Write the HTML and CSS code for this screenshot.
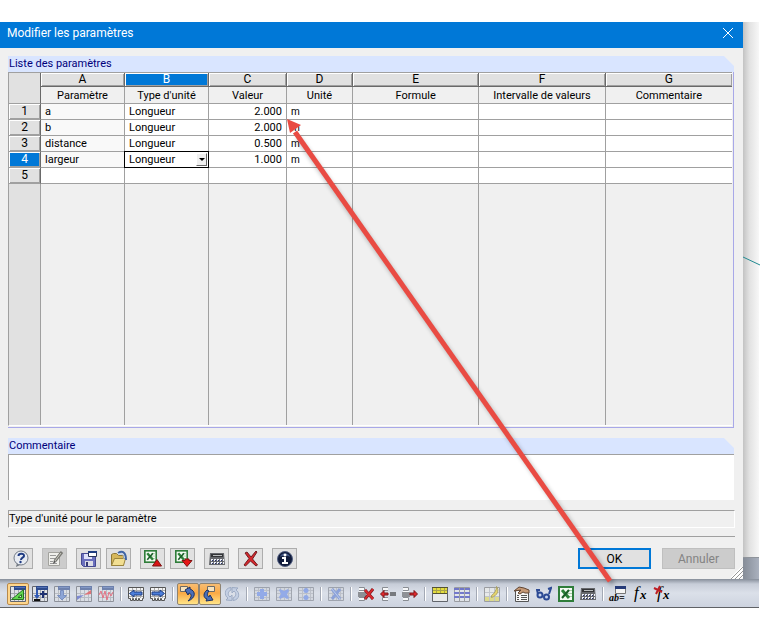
FILE: index.html
```html
<!DOCTYPE html>
<html lang="fr">
<head>
  <meta charset="UTF-8">
  <title>Modifier les paramètres</title>
  <link rel="stylesheet" href="styles.css">
</head>
<body>
  <!-- shapes shared by several icons -->
  <svg class="sprite" aria-hidden="true">
    <symbol id="grid" viewBox="0 0 16 16">
      <path fill="#dfe2e6" d="M0 0h16v16H0z"/>
      <path fill="none" stroke="#a3a7ae" d="M4.500 3v13M8.500 3v13M12.500 3v13M0 7.500h16M0 11.500h16"/>
      <path fill="none" stroke="#62656c" d="M.5.5h15v15H.5z"/>
      <path fill="#2d4a8c" d="M4 0h12v4H4z"/>
      <path fill="#5271b5" d="M5 1h10v1H5z"/>
    </symbol>
    <symbol id="cells" viewBox="0 0 16 16">
      <path fill="#d2d6dd" d="M0 1h16v14H0z"/>
      <path fill="none" stroke="#a9adb6" d="M4.500 1v14M8.500 1v14M12.500 1v14M0 4.500h16M0 7.500h16M0 11.500h16"/>
      <path fill="none" stroke="#7d828c" d="M.5 1.500h15v13H.5z"/>
    </symbol>
    <symbol id="ruler" viewBox="0 0 16 16">
      <path fill="#f3f4f5" stroke="#555" d="M.5 1.500h15v11h-1v2h-3v-2h-1v2h-2v-2h-1v2h-2v-2h-1v2h-2v-2h-2z"/>
      <path stroke="#aaa" d="M1 4.500h14M1 10.500h14M4.500 2v10M8.500 2v10M12.500 2v10"/>
    </symbol>
    <symbol id="excel" viewBox="0 0 16 16">
      <path fill="#2f7d3a" d="M0 0h16v16H0z"/>
      <path fill="#f5fbf4" d="M2 2h12v12H2z"/>
      <path stroke="#a8cfa8" d="M9 4.500h5M9 7.500h5M9 10.500h5"/>
      <path stroke="#2c8138" stroke-width="3" d="M4 4l7 8"/>
      <path stroke="#195f27" stroke-width="2" d="M11 4l-7 8"/>
    </symbol>
    <symbol id="calc" viewBox="0 0 16 16">
      <path fill="#66686c" d="M1 2h14l1 12H0z"/>
      <path fill="#333437" d="M2 3h12v3H2z"/>
      <path fill="#b9bcbd" d="M4 4h9v1H4z"/>
      <path stroke="#eef0f8" stroke-width="2" stroke-dasharray="2 1" d="M2 9h13M2 12h13"/>
      <path stroke="#27336d" stroke-dasharray="1 2" d="M3 9.500h12M3 12.500h12"/>
    </symbol>
    <symbol id="rows" viewBox="0 0 16 16">
      <path fill="#f7f8f9" d="M1 1h6v14H1z"/>
      <path fill="#8d9095" d="M0 6h8v5H0z"/>
      <path fill="none" stroke="#898d93" d="M1 1.500h5.500v3H1M1 11.500h5.500v3H1"/>
    </symbol>
  </svg>

  <div class="stage">
    <div class="workspace">
      <form class="dialog">
        <header class="titlebar">
          <h1>Modifier les paramètres</h1>
          <button type="button" class="close-btn" aria-label="Fermer">
            <svg width="12" height="12" viewBox="0 0 12 12"><path stroke="#fff" d="M1 1l10 10M11 1L1 11"/></svg>
          </button>
        </header>

        <div class="content">
          <section class="panel">
            <h2 class="panel-title">Liste des paramètres</h2>
            <div class="table-frame">
              <table class="params">
                <colgroup>
                  <col class="col-index"><col class="col-name"><col class="col-name"><col class="col-value"><col class="col-unit"><col><col><col>
                </colgroup>
                <thead>
                  <tr class="letters">
                    <th rowspan="2" class="corner"></th>
                    <th>A</th><th class="selected">B</th><th>C</th><th>D</th><th>E</th><th>F</th><th>G</th>
                  </tr>
                  <tr class="labels">
                    <th>Paramètre</th><th>Type d'unité</th><th>Valeur</th><th>Unité</th><th>Formule</th><th>Intervalle de valeurs</th><th>Commentaire</th>
                  </tr>
                </thead>
                <tbody>
                  <tr><th>1</th><td class="name">a</td><td>Longueur</td><td class="num">2.000</td><td class="unit">m</td><td></td><td></td><td></td></tr>
                  <tr><th>2</th><td class="name">b</td><td>Longueur</td><td class="num">2.000</td><td class="unit">m</td><td></td><td></td><td></td></tr>
                  <tr><th>3</th><td class="name">distance</td><td>Longueur</td><td class="num">0.500</td><td class="unit">m</td><td></td><td></td><td></td></tr>
                  <tr>
                    <th class="selected">4</th><td class="name">largeur</td>
                    <td class="editing"><div class="cell-select"><select aria-label="Type d'unité"><option>Longueur</option></select><span class="drop"></span></div></td>
                    <td class="num">1.000</td><td class="unit">m</td><td></td><td></td><td></td>
                  </tr>
                  <tr><th>5</th><td></td><td></td><td></td><td></td><td></td><td></td><td></td></tr>
                  <tr class="filler"><td></td><td></td><td></td><td></td><td></td><td></td><td></td><td></td></tr>
                </tbody>
              </table>
            </div>
          </section>

          <section class="panel">
            <h2 class="panel-title"><label for="comment">Commentaire</label></h2>
            <textarea id="comment" class="comment"></textarea>
          </section>

          <div class="hint">Type d'unité pour le paramètre</div>

          <footer class="actions">
            <button type="button" class="tool" aria-label="Aide">
              <svg width="18" height="18" viewBox="0 0 18 18"><path fill="#707780" d="M5 13l-1 4 6-3z"/><circle cx="9" cy="8" r="7" fill="#e7ebf2" stroke="#737b87"/><path fill="none" stroke="#1e3b83" stroke-width="2" d="M6.500 6c0-3 6-3 5.500 0-.3 2-3 1.500-3 4"/><circle cx="8.500" cy="12" r="1.200" fill="#1e3b83"/></svg>
            </button>
            <button type="button" class="tool off" aria-label="Modifier">
              <svg width="18" height="18" viewBox="0 0 18 18"><path fill="#f0f0ec" stroke="#a3a39e" d="M2.500 2.500h11v13h-11z"/><path stroke="#999" d="M4 5.500h6M4 8.500h5M4 11.500h3M4 13.500h7"/><path stroke="#777772" stroke-width="3" d="M16 2l-7 9"/><path stroke="#c9c9bf" d="M15 3l-6 8"/><path fill="#555" d="M7 14l1-4 2 2z"/></svg>
            </button>
            <div class="tool-pair">
              <button type="button" class="tool" aria-label="Enregistrer">
                <svg width="18" height="18" viewBox="0 0 18 18"><path fill="#6b70bd" stroke="#454991" d="M1.500 3.500h14v13h-12l-2-2z"/><path fill="#dfe2fa" d="M4 4h8v5H4z"/><path fill="#dcdde6" d="M5 11h8v5H5z"/><path fill="#343873" d="M6 12h2v4H6z"/><path fill="#fff" stroke="#283357" d="M8.500 1.500h8v5h-8z"/><path stroke="#1f3d80" stroke-width="2" d="M8 2h9"/></svg>
              </button>
              <button type="button" class="tool" aria-label="Ouvrir">
                <svg width="18" height="18" viewBox="0 0 18 18"><path fill="#d6b75a" stroke="#8e7938" d="M1.500 15.500v-11l2-1h3l2 2h5v10z"/><path fill="#f2df92" stroke="#9b853e" d="M1.500 15.500l3-7h11l-2 7z"/><path fill="none" stroke="#3f65a6" stroke-width="2" d="M8 3c5-3 8 0 8 7"/><path fill="none" stroke="#a9c4e8" d="M8 4c4-1 6 1 6 5"/></svg>
              </button>
            </div>
            <div class="tool-pair">
              <button type="button" class="tool" aria-label="Exporter vers Excel">
                <svg width="20" height="18" viewBox="0 0 20 18"><use href="#excel" x="1" width="13" height="13"/><path fill="#d81515" stroke="#7f1212" d="M14 9.500l4.500 6.500h-9z"/></svg>
              </button>
              <button type="button" class="tool" aria-label="Importer depuis Excel">
                <svg width="20" height="18" viewBox="0 0 20 18"><use href="#excel" x="2" width="13" height="13"/><path fill="#e51616" stroke="#7f1212" d="M9 10.500h3V9h4v1.500h3l-5 6z"/></svg>
              </button>
            </div>
            <button type="button" class="tool" aria-label="Calculatrice">
              <svg width="16" height="16"><use href="#calc"/></svg>
            </button>
            <button type="button" class="tool" aria-label="Supprimer">
              <svg width="18" height="18" viewBox="0 0 18 18"><path fill="#d6272c" stroke="#731c20" d="M3 3l2-1 4 5 5-6 1 1-4.500 7 5 6-1.500 1-5.500-5-5 5-1.500-1 5-6.500z"/></svg>
            </button>
            <button type="button" class="tool" aria-label="Informations">
              <svg width="18" height="18" viewBox="0 0 18 18"><circle cx="9" cy="9" r="7.500" fill="#101b3b" stroke="#536082"/><path fill="#405584" d="M4 7c1-5 9-5 10 0-3-2-7-2-10 0z"/><circle cx="9" cy="5" r="1.500" fill="#fff"/><path fill="#fff" d="M6 7h4v5h2v2H6v-2h2V9H6z"/></svg>
            </button>
            <div class="main-actions">
              <button type="submit" class="btn primary">OK</button>
              <button type="button" class="btn" disabled>Annuler</button>
            </div>
          </footer>
        </div>
        <svg class="grip" width="12" height="12" viewBox="0 0 12 12" aria-hidden="true"><path stroke="#fff" stroke-width="3" d="M0 12L12 0M4 12l8-8M8 12l4-4"/><path stroke="#969696" d="M0 12L12 0M4 12l8-8M8 12l4-4"/></svg>
      </form>

      <div class="side">
        <div class="canvas">
          <svg width="17" height="10" viewBox="0 0 17 10" aria-hidden="true"><path stroke="#238a91" d="M0 1l17 8"/></svg>
        </div>
        <div class="band"></div>
      </div>
    </div>

    <nav class="toolbar" aria-label="Tableau">
      <div class="group">
        <button type="button" class="active" aria-label="Tableau">
          <svg width="16" height="16" viewBox="0 0 16 16"><use href="#grid"/><path fill="#62d850" stroke="#287323" fill-rule="evenodd" d="M1.500 13.500l12-10v10zM8 11.500h3.500V8.500z"/></svg>
        </button>
        <button type="button" aria-label="Insérer">
          <svg width="16" height="16" viewBox="0 0 16 16"><use href="#grid"/><path fill="#2f59b5" d="M4 4h2v5h2l-3 4-3-4h2z"/><path fill="#1d3070" d="M10 5h2v2h3v2h-3v3h-2V9H8V7h2z"/><path stroke="#111" stroke-width="2" d="M2 14h6"/></svg>
        </button>
        <button type="button" class="faded" aria-label="Descendre">
          <svg width="16" height="16" viewBox="0 0 16 16"><use href="#grid"/><path fill="#5a80cc" stroke="#3b5ba5" d="M6.500 4.500h3v5h3L8 14l-4.500-4.500h3z"/></svg>
        </button>
        <button type="button" class="faded" aria-label="Diagramme">
          <svg width="16" height="16" viewBox="0 0 16 16"><use href="#grid"/><path fill="#4353c4" d="M1 14v-4l7-1z"/><path fill="#e42d2d" d="M8 9l7-5v4z"/></svg>
        </button>
        <button type="button" class="faded" aria-label="Courbe">
          <svg width="16" height="16" viewBox="0 0 16 16"><use href="#grid"/><path fill="none" stroke="#ed2940" d="M1 9l2-4 2 7 2-7 2 9 2-8 2 4 2-4"/></svg>
        </button>
      </div>
      <div class="group">
        <button type="button" aria-label="Tableau précédent">
          <svg width="16" height="16" viewBox="0 0 16 16"><use href="#ruler"/><path fill="#4d7fdb" stroke="#203f82" d="M1.500 7.500L6 4v2h8v3H6v2z"/></svg>
        </button>
        <button type="button" aria-label="Tableau suivant">
          <svg width="16" height="16" viewBox="0 0 16 16"><use href="#ruler"/><path fill="#4d7fdb" stroke="#203f82" d="M14.500 7.500L10 4v2H2v3h8v2z"/></svg>
        </button>
      </div>
      <div class="group">
        <button type="button" class="active strong" aria-label="Synchroniser la sélection">
          <svg width="18" height="18" viewBox="0 0 18 18"><path fill="#f7e3bd" stroke="#6b6a68" d="M1.500 1.500h7v5h-7z"/><path fill="#4a6fb8" stroke="#1a2f63" d="M6 5l5-3v2c6 2 6 9-2 12 4-4 4-7 1-8l-1 2z"/></svg>
        </button>
        <button type="button" class="active strong" aria-label="Synchroniser le tableau">
          <svg width="18" height="18" viewBox="0 0 18 18"><path fill="#f7e3bd" stroke="#6b6a68" d="M6.500 1.500h7v5h-7z"/><path fill="#4a6fb8" stroke="#1a2f63" d="M6 5c-4 3-4 8 0 9l-1 2 7-1-3-5-1 2c-2-1-2-4 0-6z"/></svg>
        </button>
        <button type="button" class="faded" aria-label="Actualiser">
          <svg width="16" height="16" viewBox="0 0 16 16"><path fill="#b9c8e2" stroke="#788cae" d="M7 1.500C0 2 0 10 4 12l-2 2 6 .5V9L6 11C3 9 4 5 7 4zM9 14.500c7-.5 7-8.500 3-10.500l2-2-6-.5V7l2-2c3 2 2 6-1 7z"/></svg>
        </button>
      </div>
      <div class="group">
        <button type="button" class="faded" aria-label="Ajouter">
          <svg width="16" height="16" viewBox="0 0 16 16"><use href="#cells"/><path fill="#6488e8" d="M6 3h4v3h3v4h-3v3H6v-3H3V6h3z"/></svg>
        </button>
        <button type="button" class="faded" aria-label="Multiplier">
          <svg width="16" height="16" viewBox="0 0 16 16"><use href="#cells"/><path fill="#6488e8" d="M4 3l4 2 4-2 1 2-2 3 2 4-2 1-3-2-4 2-1-2 2-3-2-4z"/></svg>
        </button>
        <button type="button" class="faded" aria-label="Diviser">
          <svg width="16" height="16" viewBox="0 0 16 16"><use href="#cells"/><circle cx="8" cy="4.500" r="2.500" fill="#6488e8"/><circle cx="8" cy="11.500" r="2.500" fill="#6488e8"/></svg>
        </button>
      </div>
      <div class="group">
        <button type="button" class="faded" aria-label="Effacer">
          <svg width="16" height="16" viewBox="0 0 16 16"><use href="#cells"/><path stroke="#5a7ad0" stroke-width="3" d="M4 3l8 10M12 3L4 13"/><path stroke="#a9c0f2" d="M4 3l8 10"/></svg>
        </button>
      </div>
      <div class="group">
        <button type="button" aria-label="Supprimer la ligne">
          <svg width="16" height="16" viewBox="0 0 16 16"><use href="#rows"/><path stroke="#751b20" stroke-width="3" d="M7 4l8 9M15 3l-8 10"/><path stroke="#d8282d" stroke-width="2" d="M7 4l8 9M15 3l-8 10"/></svg>
        </button>
        <button type="button" aria-label="Insérer une ligne">
          <svg width="16" height="16" viewBox="0 0 16 16"><path fill="#f7f8f9" stroke="#898d93" d="M8 1.500H2.500v3H8M8 11.500H2.500v3H8"/><path fill="#777a7e" d="M10 6h6v4h-6z"/><path fill="#df272b" stroke="#7b171a" d="M.5 8L4 4.500V7h4v2H4v2.500z"/></svg>
        </button>
        <button type="button" aria-label="Retirer une ligne">
          <svg width="16" height="16" viewBox="0 0 16 16"><use href="#rows"/><path fill="#df272b" stroke="#7b171a" d="M15.500 8L12 4.500V7H8v2h4v2.500z"/></svg>
        </button>
      </div>
      <div class="group">
        <button type="button" aria-label="En-tête">
          <svg width="16" height="16" viewBox="0 0 16 16"><path fill="#e8eaec" stroke="#62656b" d="M.5 1.500h15v14H.5z"/><path fill="#e4dd3d" d="M1 2h14v5H1z"/><path fill="none" stroke="#a8a34a" d="M1 4.500h14M4.500 2v5M8.500 2v5M12.500 2v5"/><path stroke="#55532f" d="M0 1.500h16M1 7.500h14"/></svg>
        </button>
        <button type="button" class="faded" aria-label="Lignes colorées">
          <svg width="16" height="16" viewBox="0 0 16 16"><path fill="#e8eaec" stroke="#777" d="M.5 1.500h15v14H.5z"/><path stroke="#3036b8" stroke-width="2" d="M0 3h16M0 7h16M0 11h16"/><path stroke="#777" d="M5.500 1v14M10.500 1v14"/></svg>
        </button>
      </div>
      <div class="group">
        <button type="button" class="faded" aria-label="Surligner">
          <svg width="16" height="16" viewBox="0 0 16 16"><path fill="#f2f2ec" stroke="#777" d="M.5 1.500h15v14H.5z"/><path fill="#e3dc55" d="M1 11h14v4H1z"/><path stroke="#b4b7bc" d="M1 6.500h14M1 10.500h14M5.500 2v13M10.500 2v13"/><path fill="#f0cf18" stroke="#8f7d15" d="M12.500.5c3 4 1 9-5 11v-2c3-2 5-5 5-9z"/></svg>
        </button>
      </div>
      <div class="group">
        <button type="button" aria-label="Propriétés">
          <svg width="16" height="16" viewBox="0 0 16 16"><path fill="#f8f8f8" stroke="#555" d="M1.500 4.500h13v11h-13z"/><path stroke="#555" d="M3 9.500h2M7 9.500h6M3 11.500h2M7 11.500h6M3 13.500h2M7 13.500h6"/><path fill="#c69a77" stroke="#604532" d="M0 5l5-4 5 1 5 2v3h-4L9 6 6 8 4 7l3-3z"/></svg>
        </button>
        <button type="button" aria-label="Afficher">
          <svg width="16" height="16" viewBox="0 0 16 16"><path fill="none" stroke="#2c4a94" stroke-width="2" d="M2 8L1 4l3 0M13 8l2-6-3 1"/><circle cx="4" cy="9" r="2.500" fill="#c9d6ef" stroke="#2c4a94" stroke-width="2"/><circle cx="10.500" cy="11" r="2.500" fill="#c9d6ef" stroke="#2c4a94" stroke-width="2"/></svg>
        </button>
        <button type="button" aria-label="Excel">
          <svg width="16" height="16"><use href="#excel"/></svg>
        </button>
        <button type="button" aria-label="Calculatrice">
          <svg width="16" height="16"><use href="#calc"/></svg>
        </button>
      </div>
      <div class="group">
        <button type="button" class="formula" aria-label="Modifier les paramètres">
          <svg width="18" height="18" viewBox="0 0 18 18"><path fill="#f5f5f5" stroke="#777" d="M6.500 2.500h10v6h-10z"/><path stroke="#263b78" stroke-width="3" d="M6 2.500h11"/><text x="0" y="16" class="ab">ab=</text></svg>
        </button>
        <button type="button" class="formula" aria-label="Formule">
          <svg width="18" height="18" viewBox="0 0 18 18"><text x="3" y="13" class="fn">f</text><text x="9" y="14" class="fx">x</text></svg>
        </button>
        <button type="button" class="formula" aria-label="Supprimer les formules">
          <svg width="18" height="18" viewBox="0 0 18 18"><text x="4" y="13" class="fn">f</text><text x="10" y="14" class="fx">x</text><path stroke="#bd1e25" stroke-width="2" d="M1 3l8 4M7 1L3 9"/></svg>
        </button>
      </div>
    </nav>

    <!-- arrow from the toolbar button to the value column -->
    <svg class="pointer" width="340" height="475" viewBox="0 0 340 475" aria-hidden="true">
      <path class="pointer-shadow" d="M11 19L326 465"/>
      <path stroke="#e94b43" stroke-width="5" d="M8 13L323 462"/>
      <path fill="#e94b43" d="M0 0l14 6-11 8z"/>
    </svg>
  </div>
</body>
</html>
```
FILE: styles.css
```css
* {
  box-sizing: border-box;
}

body {
  margin: 0;
  background: #fff;
  color: #000;
  font-family: Roboto, "Liberation Sans", sans-serif;
  font-size: 11px;
}

button,
select,
textarea {
  font: inherit;
  margin: 0;
}

.sprite {
  position: absolute;
  width: 0;
  height: 0;
}

.stage {
  position: relative;
  margin-top: 22px;
}

.workspace {
  display: flex;
}

/* Dialog */
.dialog {
  position: relative;
  flex: 1;
  min-width: 0;
  background: #f0f0f0;
}

.titlebar {
  display: flex;
  align-items: center;
  justify-content: space-between;
  height: 26px;
  padding: 0 9px 4px 7px;
  background: #0078d7;
  color: #fff;
}

.titlebar h1 {
  margin: 0;
  font-size: 12px;
  font-weight: normal;
  line-height: 20px;
}

.close-btn {
  display: flex;
  padding: 0;
  border: none;
  background: transparent;
}

.content {
  padding: 8px 8px 10px;
}

.panel {
  margin-right: 1px;
  margin-bottom: 10px;
}

.panel-title {
  margin: 0;
  padding-left: 1px;
  background: #d9e5ff;
  clip-path: polygon(0 0, calc(100% - 10px) 0, 100% 10px, 100% 100%, 0 100%);
  color: #00007b;
  font-size: 11px;
  font-weight: normal;
  line-height: 16px;
}

.table-frame {
  padding: 0 1px 1px 0;
  border-right: 1px solid #a8a8e8;
  border-bottom: 1px solid #a8a8e8;
}

/* Parameter table */
.params {
  width: 100%;
  table-layout: fixed;
  border-collapse: separate;
  border-spacing: 0;
  border-top: 1px solid #a0a0a0;
  border-left: 1px solid #a0a0a0;
  border-bottom: 1px solid #fff;
}

.col-index {
  width: 32px;
}

.col-name {
  width: 84px;
}

.col-value {
  width: 78px;
}

.col-unit {
  width: 66px;
}

.params th,
.params td {
  height: 16px;
  padding: 0 4px;
  border-right: 1px solid #a0a0a0;
  border-bottom: 1px solid #a0a0a0;
  font-weight: normal;
  line-height: 15px;
  white-space: nowrap;
}

.params tr > :last-child {
  border-right: none;
}

.params td {
  background: #fff;
}

.params .name {
  background: #f9f9f9;
}

.params .letters th {
  height: 14px;
  border-right-color: #696969;
  border-bottom-color: #696969;
  background: #e1e1e1;
  box-shadow: inset 1px 1px #fff, inset -1px -1px #a0a0a0;
  font-size: 12px;
  line-height: 13px;
}

.params .letters .corner {
  border-bottom-color: #a0a0a0;
  box-shadow: none;
}

.params .labels th {
  height: 17px;
  background: #f0f0f0;
}

.params tbody th {
  border-right-color: #696969;
  background: #e1e1e1;
  box-shadow: inset 1px 1px #fff, inset -1px -1px #a0a0a0;
  font-size: 12px;
}

.params .letters .selected,
.params tbody .selected {
  background: #0078d7;
  color: #fff;
}

.params .num {
  text-align: right;
}

.params .unit {
  font-size: 10px;
}

.params .editing {
  padding: 0;
}

.cell-select {
  display: flex;
  position: relative;
  height: 15px;
  outline: 1px solid #000;
}

.cell-select select {
  width: 100%;
  padding: 0 4px;
  border: none;
  border-radius: 0;
  background: #fff;
  appearance: none;
}

.drop {
  position: absolute;
  top: 1px;
  right: 1px;
  bottom: 1px;
  width: 11px;
  border: 1px solid;
  border-color: #fff #696969 #696969 #fff;
  background: #f0f0f0;
  pointer-events: none;
}

.drop::after {
  content: "";
  position: absolute;
  top: 4px;
  left: 2px;
  border: 3px solid transparent;
  border-top-color: #000;
  border-bottom: none;
}

.params .filler td {
  height: 241px;
  border-bottom: none;
  background: #f0f0f0;
}

.params .filler td:first-child {
  background: #e1e1e1;
}

.comment {
  display: block;
  width: 100%;
  height: 46px;
  border: none;
  border-top: 1px solid #a0a0a0;
  border-left: 1px solid #a0a0a0;
  background: #fff;
  resize: none;
}

.hint {
  height: 18px;
  border: 1px solid;
  border-color: #a0a0a0 #fff #fff #a0a0a0;
  line-height: 16px;
}

/* Button row */
.actions {
  display: flex;
  align-items: center;
  gap: 9px;
  margin-top: 8px;
  padding-top: 11px;
  border-top: 1px solid #a0a0a0;
}

.tool-pair {
  display: flex;
  gap: 5px;
}

.tool {
  display: flex;
  align-items: center;
  justify-content: center;
  width: 25px;
  height: 21px;
  padding: 0;
  border: 1px solid #adadad;
  background: #e1e1e1;
}

.tool.off {
  border-color: #bfbfbf;
  background: #ccc;
}

.main-actions {
  display: flex;
  gap: 11px;
  margin-left: auto;
}

.btn {
  width: 73px;
  height: 21px;
  padding: 0;
  border: 1px solid #bfbfbf;
  background: #ccc;
  color: #838383;
  font-size: 12px;
}

.btn.primary {
  border: 2px solid #0078d7;
  background: #e1e1e1;
  color: #000;
}

.grip {
  position: absolute;
  right: 0;
  bottom: 0;
}

/* Window behind the dialog */
.side {
  display: flex;
  flex-direction: column;
  width: 17px;
  padding-right: 1px;
}

.canvas {
  flex: 1;
  padding-top: 234px;
  background: linear-gradient(to right, #c3c3c3, #e2e2e2 40%, #f7f7f7);
}

.canvas svg {
  display: block;
}

.band {
  height: 22px;
  border-top: 1px solid #8f949b;
  background: linear-gradient(to right, #858c97, #aab1be);
}

.toolbar {
  display: flex;
  align-items: center;
  height: 29px;
  margin-right: 1px;
  padding: 2px 7px 0;
  border-bottom: 1px solid #606266;
  background: linear-gradient(#868e9a, #c7cdd8 5px, #dbe0e9 14px, #cdd3df);
}

.group {
  display: flex;
}

.group + .group {
  padding-left: 8px;
  background: linear-gradient(#a3a9b5, #a3a9b5) 3px 4px / 1px 14px no-repeat,
    linear-gradient(#fff, #fff) 4px 4px / 1px 14px no-repeat;
}

.toolbar button {
  display: flex;
  align-items: center;
  justify-content: center;
  width: 22px;
  height: 22px;
  padding: 0;
  border: 1px solid transparent;
  background: transparent;
}

.toolbar .active {
  border-color: #b7894c;
  border-radius: 2px;
  background: #ffd68c;
}

.toolbar .strong {
  border-color: #8e8371;
  background: linear-gradient(#f8bd72, #f9a945 45%, #ffe487);
}

.faded svg {
  opacity: 0.6;
}

.formula svg {
  overflow: visible;
}

.formula text {
  font-family: "Liberation Serif", "Times New Roman", serif;
  font-style: italic;
}

.formula .ab {
  font-size: 10px;
  font-weight: bold;
}

.formula .fn {
  font-size: 17px;
}

.formula .fx {
  font-size: 13px;
  font-weight: bold;
}

.pointer {
  position: absolute;
  top: 97px;
  left: 287px;
  fill: none;
  pointer-events: none;
}

.pointer-shadow {
  stroke: #000;
  stroke-width: 5px;
  opacity: 0.25;
  filter: blur(2px);
}
```
